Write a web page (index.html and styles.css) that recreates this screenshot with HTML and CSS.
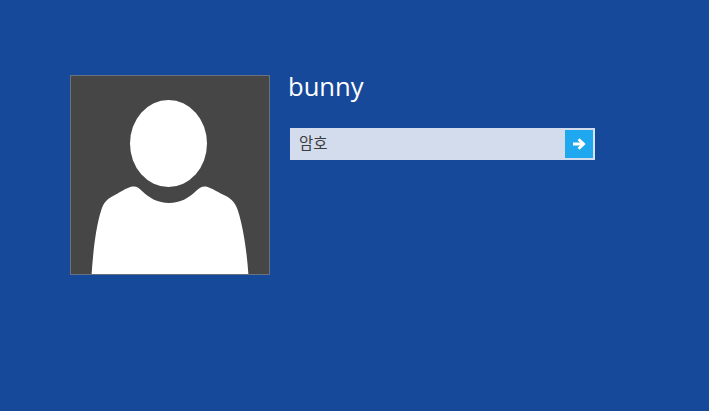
FILE: index.html
```html
<!DOCTYPE html>
<html lang="ko">
<head>
  <meta charset="UTF-8" />
  <title>bunny</title>
  <link rel="stylesheet" href="styles.css">
</head>
<body>

  <div class="login">
    <div class="avatar">
      <svg viewBox="0 0 198 199" width="198" height="199">
        <ellipse cx="97.5" cy="67.5" rx="38.5" ry="43.5" fill="#fff" />
        <path fill="#fff" d="M20.5 200 C22 176 25 150 30 135 C32 127 36 123 42 120 C48 117 55 112 61 110.5 C66 110 68 112 71 115 C78 122 87 127 98 127 C109 127 118 122 125 115 C128 112 131 110 135 110.5 C141 112 148 117 155 120 C161 123 165 128 167 135 C172 150 176 176 177.5 200 Z" />
      </svg>
    </div>
    <div class="side">
      <div class="name">bunny</div>
      <div class="field">
        <div class="placeholder">암호</div>
        <button class="go">
          <svg viewBox="0 0 14 12" width="14" height="12">
            <path d="M1 6 H11 M6.6 1.2 L11.6 6 L6.6 10.8" fill="none" stroke="#fff" stroke-width="2.8" />
          </svg>
        </button>
      </div>
    </div>
  </div>

</body>
</html>
```

FILE: styles.css
```css
html, body {
  height: 100%;
}

body {
  margin: 0;
  background-color: #16499a;
  font-family: 'Open Sans', 'Noto Sans CJK KR', sans-serif;
  overflow: hidden;
}

.login {
  display: flex;
  gap: 18px;
  padding: 75px 0 0 70px;
}

.avatar {
  width: 198px;
  height: 198px;
  background-color: #464646;
  border: 1px solid #67717f;
  overflow: hidden;
}

.avatar svg {
  display: block;
}

.side {
  display: flex;
  flex-direction: column;
}

.name {
  color: #fff;
  font-size: 25.6px;
  line-height: 23px;
  height: 53px;
}

.field {
  display: flex;
  width: 301px;
  height: 28px;
  margin-left: 2px;
  background-color: #d3dcec;
  border: 2px solid #d3dcec;
  border-right-color: #d8e4f2;
}

.placeholder {
  flex: 1;
  padding-left: 7px;
  color: #3c3c3c;
  font-family: 'Noto Sans CJK KR', sans-serif;
  font-size: 15.5px;
  line-height: 25px;
}

.go {
  display: flex;
  align-items: center;
  justify-content: center;
  width: 28px;
  height: 28px;
  padding: 0;
  border: 0;
  background-color: #1fa8f0;
}
```
